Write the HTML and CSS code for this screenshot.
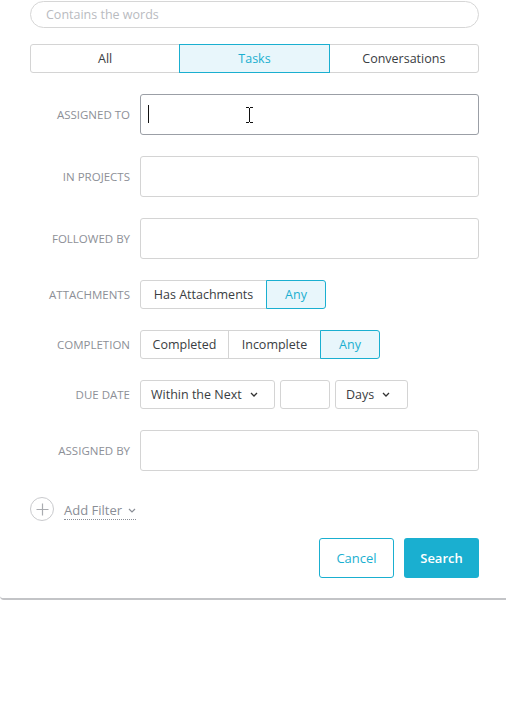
FILE: index.html
```html
<!DOCTYPE html>
<html>
<head>
<meta charset="utf-8">
<link rel="stylesheet" href="styles.css">
</head>
<body>
<div class="panel">
  <div class="search-box"><span class="placeholder">Contains the words</span></div>
  <div class="tabs">
    <div class="tab">All</div>
    <div class="tab active">Tasks</div>
    <div class="tab">Conversations</div>
  </div>
  <div class="rows">
    <div class="row">
      <div class="label">ASSIGNED TO</div>
      <div class="field focused"><span class="caret"></span>
        <svg class="ibeam" width="9" height="16" viewBox="0 0 9 16"><path d="M1 0.5h3M5 0.5h3M4.5 1v14M1 15.5h3M5 15.5h3" stroke="#111" stroke-width="1" fill="none"/></svg>
      </div>
    </div>
    <div class="row">
      <div class="label">IN PROJECTS</div>
      <div class="field"></div>
    </div>
    <div class="row">
      <div class="label">FOLLOWED BY</div>
      <div class="field"></div>
    </div>
    <div class="row">
      <div class="label">ATTACHMENTS</div>
      <div class="group">
        <div class="opt w126">Has Attachments</div>
        <div class="opt sel w60">Any</div>
      </div>
    </div>
    <div class="row">
      <div class="label">COMPLETION</div>
      <div class="group">
        <div class="opt w88">Completed</div>
        <div class="opt w92">Incomplete</div>
        <div class="opt sel w60">Any</div>
      </div>
    </div>
    <div class="row">
      <div class="label">DUE DATE</div>
      <div class="dd-wrap">
        <div class="dropdown w135">Within the Next <svg class="chev" width="8" height="5" viewBox="0 0 8 5"><path d="M1 1l3 3 3-3" stroke="#333" stroke-width="1.3" fill="none"/></svg></div>
        <div class="num"></div>
        <div class="dropdown w73">Days <svg class="chev" width="8" height="5" viewBox="0 0 8 5"><path d="M1 1l3 3 3-3" stroke="#333" stroke-width="1.3" fill="none"/></svg></div>
      </div>
    </div>
    <div class="row">
      <div class="label">ASSIGNED BY</div>
      <div class="field"></div>
    </div>
  </div>
  <div class="add-filter">
    <span class="plus"><svg width="13" height="13" viewBox="0 0 13 13"><path d="M6.5 0.5v12M0.5 6.5h12" stroke="#a9abb0" stroke-width="1.2" fill="none"/></svg></span>
    <span class="add-text">Add Filter <svg class="chev" width="8" height="5" viewBox="0 0 8 5"><path d="M1 1l3 3 3-3" stroke="#8a8e96" stroke-width="1.2" fill="none"/></svg></span>
  </div>
  <div class="actions">
    <div class="btn cancel">Cancel</div>
    <div class="btn primary">Search</div>
  </div>
</div>
</body>
</html>
```

FILE: styles.css
```css
* { box-sizing: border-box; }
html { overflow: hidden; background: #fff; }
body {
  margin: 0;
  padding: 0;
  font-family: "Open Sans", "Liberation Sans", sans-serif;
  font-size: 12.5px;
  color: #3a3d42;
}
.panel {
  width: 512px;
  padding: 1px 33px 20px 30px;
  background: #fff;
  border-radius: 0 0 4px 4px;
  border-bottom: 2px solid #c3c4c7;
}
.search-box {
  height: 27px;
  border: 1px solid #d6d6d6;
  border-radius: 14px;
  display: flex;
  align-items: center;
  padding-left: 15px;
}
.placeholder { color: #b9bbbf; font-size: 12.5px; }
.tabs {
  margin-top: 16px;
  display: flex;
  height: 29px;
}
.tab {
  flex: 1;
  display: flex;
  align-items: center;
  justify-content: center;
  border: 1px solid #d4d4d4;
  margin-left: -1px;
}
.tab:first-child { margin-left: 0; border-radius: 3px 0 0 3px; }
.tab:last-child { border-radius: 0 3px 3px 0; }
.tab.active {
  border-color: #1aafd0;
  background: #e8f6fb;
  color: #1aafd0;
  position: relative;
}
.rows {
  margin-top: 21px;
  display: flex;
  flex-direction: column;
  gap: 21px;
}
.row {
  display: flex;
  align-items: center;
}
.label {
  width: 100px;
  margin-right: 10px;
  text-align: right;
  font-size: 11.5px;
  color: #8d9097;
  white-space: nowrap;
}
.field {
  flex: 1;
  height: 41px;
  border: 1px solid #d4d4d4;
  border-radius: 3px;
  position: relative;
}
.field.focused { border-color: #9b9fa6; }
.caret {
  position: absolute;
  left: 7px;
  top: 10px;
  width: 1px;
  height: 18px;
  background: #111;
}
.ibeam {
  position: absolute;
  left: 104px;
  top: 12px;
}
.group { display: flex; height: 29px; }
.opt {
  display: flex;
  align-items: center;
  justify-content: center;
  border: 1px solid #d4d4d4;
  margin-left: -1px;
}
.opt:first-child { margin-left: 0; border-radius: 3px 0 0 3px; }
.opt:last-child { border-radius: 0 3px 3px 0; }
.opt.sel {
  background: #e8f6fb;
  border-color: #1aafd0;
  color: #1aafd0;
  position: relative;
}
.w126 { width: 127px; }
.w60 { width: 60px; }
.w88 { width: 89px; }
.w92 { width: 93px; }
.w135 { width: 135px; }
.w73 { width: 73px; }
.dd-wrap { display: flex; gap: 5px; height: 29px; }
.dropdown {
  border: 1px solid #d4d4d4;
  border-radius: 3px;
  display: flex;
  align-items: center;
  padding-left: 10px;
  gap: 8px;
}
.num {
  width: 50px;
  border: 1px solid #d4d4d4;
  border-radius: 3px;
}
.chev { display: block; }
.add-filter {
  margin-top: 26px;
  display: flex;
  align-items: center;
  gap: 10px;
  height: 24px;
}
.plus {
  width: 24px;
  height: 24px;
  border: 1px solid #c9cacd;
  border-radius: 50%;
  display: flex;
  align-items: center;
  justify-content: center;
}
.add-text {
  color: #8a8e96;
  font-size: 13px;
  display: flex;
  align-items: center;
  gap: 6px;
  border-bottom: 1px dotted #8a8e96;
  padding-bottom: 0;
  margin-top: 3px;
}
.actions {
  margin-top: 17px;
  display: flex;
  justify-content: flex-end;
  gap: 10px;
}
.btn {
  width: 75px;
  height: 40px;
  border-radius: 3px;
  display: flex;
  align-items: center;
  justify-content: center;
  font-size: 13px;
}
.cancel { border: 1px solid #1aafd0; color: #1aafd0; }
.primary { background: #1aafd0; color: #fff; font-weight: 600; }
```
